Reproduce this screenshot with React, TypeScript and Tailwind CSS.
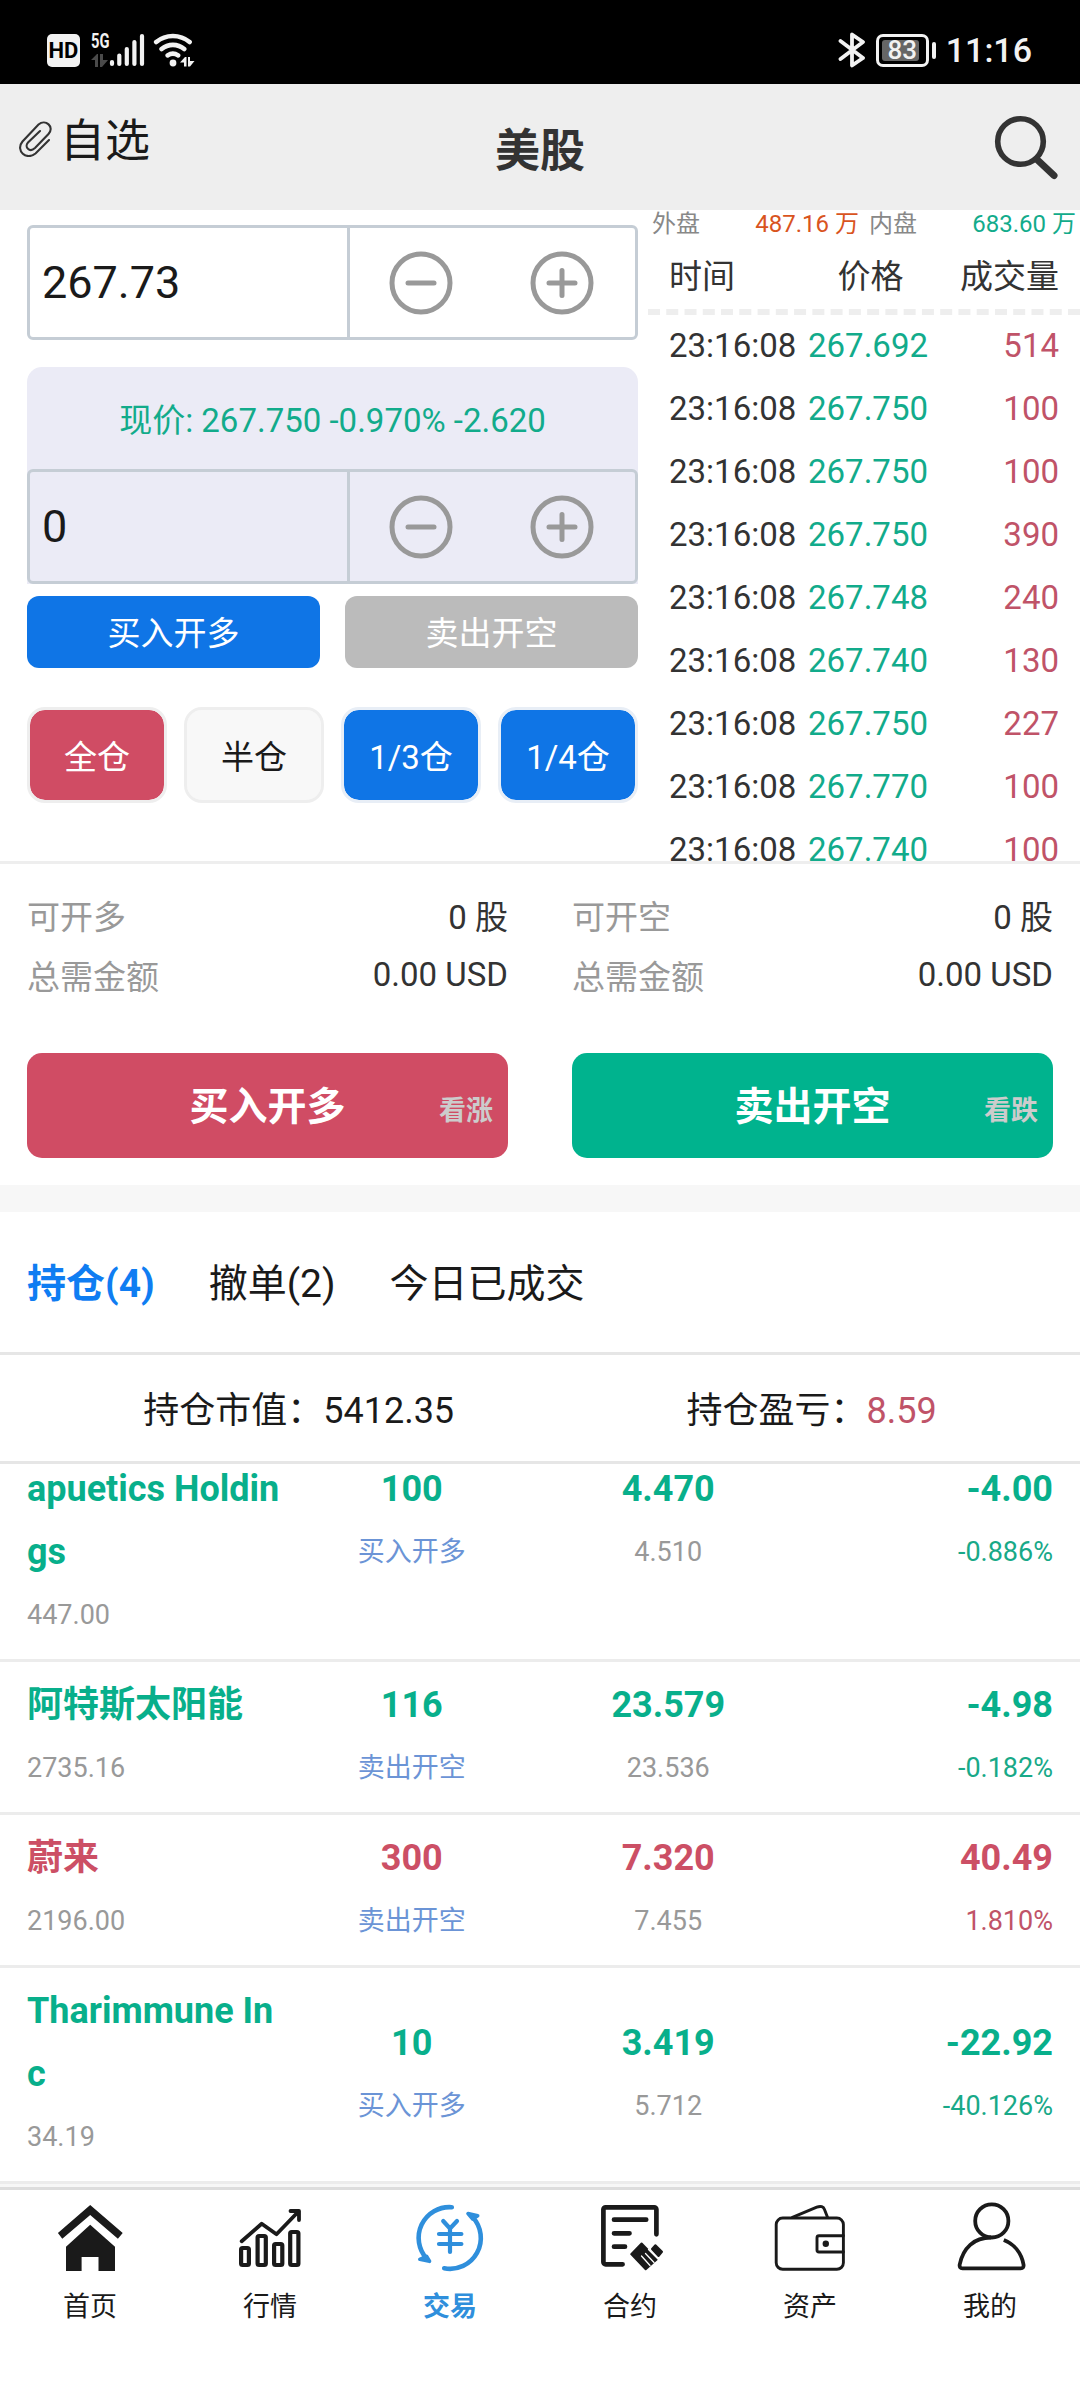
import { ReactNode } from 'react';
import clsx from 'clsx';

const trades = [
    { time: '23:16:08', price: '267.692', volume: 514 },
    { time: '23:16:08', price: '267.750', volume: 100 },
    { time: '23:16:08', price: '267.750', volume: 100 },
    { time: '23:16:08', price: '267.750', volume: 390 },
    { time: '23:16:08', price: '267.748', volume: 240 },
    { time: '23:16:08', price: '267.740', volume: 130 },
    { time: '23:16:08', price: '267.750', volume: 227 },
    { time: '23:16:08', price: '267.770', volume: 100 },
    { time: '23:16:08', price: '267.740', volume: 100 },
];

const positions = [
    { name: 'apuetics Holdings', value: '447.00', qty: 100, side: '买入开多', price: '4.470', cost: '4.510', pnl: '-4.00', rate: '-0.886%', up: false, top: true },
    { name: '阿特斯太阳能', value: '2735.16', qty: 116, side: '卖出开空', price: '23.579', cost: '23.536', pnl: '-4.98', rate: '-0.182%', up: false },
    { name: '蔚来', value: '2196.00', qty: 300, side: '卖出开空', price: '7.320', cost: '7.455', pnl: '40.49', rate: '1.810%', up: true },
    { name: 'Tharimmune Inc', value: '34.19', qty: 10, side: '买入开多', price: '3.419', cost: '5.712', pnl: '-22.92', rate: '-40.126%', up: false },
];

/* Status bar */
function StatusBar() {
    return (
        <div className="h-[84px] bg-black flex items-center justify-between pl-[47px] pr-[48px] pt-[16px]">
            <div className="flex items-center">
                <div className="w-[33px] h-[33px] rounded-[5px] bg-[#f2f2f2] text-black text-[22px] leading-[34px] font-bold flex justify-center">HD</div>
                <div className="ml-[11px] w-[18px] h-[34px] flex flex-col justify-between">
                    <span className="text-[#f2f2f2] text-[21px] leading-[17px] font-bold origin-left scale-x-[0.7]">5G</span>
                    <svg className="w-[17px] h-[13px]" viewBox="0 0 17 13" fill="#4a4a4a">
                        <path d="M0 6 6 0h1v13H4V6zM9 0h3v6h5l-6 7H9z" />
                    </svg>
                </div>
                <svg className="w-[36px] h-[34px]" viewBox="0 0 36 34" stroke="#f2f2f2" strokeWidth="4.2" strokeLinecap="round">
                    <path d="M3 29v2M10.3 22.5V31M17.8 16v15M25.4 9v22M33 3v28" />
                </svg>
                <svg className="ml-[8px] w-[42px] h-[34px]" viewBox="0 0 42 34" fill="none" stroke="#f2f2f2" strokeWidth="4.6" strokeLinecap="round">
                    <path d="M3.2 9a26 26 0 0 1 33.4 0M8.6 16a17.5 17.5 0 0 1 22.6 0M14.7 22.4a9.3 9.3 0 0 1 10.4 0" />
                    <circle cx="20" cy="30" r="3.4" fill="#f2f2f2" stroke="none" />
                    <path d="M27 29.5 32 24h1.500v9.500h-2.500v-4zM35 24h2v4h4.500L37 33.500h-2z" fill="#f2f2f2" stroke="none" />
                </svg>
            </div>
            <div className="flex items-center">
                <svg className="w-[28px] h-[36px]" viewBox="0 0 28 36" fill="none" stroke="#f2f2f2" strokeWidth="3.8" strokeLinejoin="round" strokeLinecap="round">
                    <path d="M3.500 9 26 26 15 33.500v-31L26 10 3.500 27" />
                </svg>
                <div className="ml-[11px] w-[53px] h-[33px] border-[3px] border-[#f2f2f2] rounded-[7px] p-[3px]">
                    <div className="w-[37px] h-[21px] rounded-[3px] bg-[#666] text-[#f2f2f2] text-[26px] leading-[21px] font-medium flex justify-center pl-[4px]">83</div>
                </div>
                <div className="ml-[3px] w-[4px] h-[17px] rounded-[2px] bg-[#f2f2f2]" />
                <span className="ml-[10px] text-[#f2f2f2] text-[34px] leading-[36px] font-medium">11:16</span>
            </div>
        </div>
    );
}

function Header() {
    return (
        <div className="h-[126px] bg-[#eee] grid grid-cols-3">
            <div className="flex pl-[18px] pt-[24px]">
                <svg className="mt-[12px] w-[35px] h-[37px]" viewBox="0 0 35 37" fill="none" stroke="#333" strokeWidth="2.100" strokeLinecap="round">
                    <path d="M31 20 17.500 33.500C8.500 41-3 30.500 4.500 21.500L20.500 4.500C27.500-1.500 37 7 30.500 14L17 28C11.500 33 6 27 10 22.500L22 11" />
                </svg>
                <span className="ml-[7px] text-[45px] leading-[68px] text-[#1a1a1a]">自选</span>
            </div>
            <h1 className="text-center text-[45px] leading-[135px] font-bold text-[#333]">美股</h1>
            <div className="flex justify-end pr-[20px] pt-[30px]">
                <svg className="w-[66px] h-[66px]" viewBox="0 0 66 66" fill="none" stroke="#333">
                    <circle cx="26.500" cy="27.500" r="22.800" strokeWidth="5.600" />
                    <path d="M43 45.500 60 61.500" strokeWidth="7" strokeLinecap="round" />
                </svg>
            </div>
        </div>
    );
}

/* Number input with minus / plus */
function Stepper({ value }: { value: string }) {
    return (
        <div className="h-[115px] border-[3px] border-[#c5cdd5] rounded-[6px] flex text-[#1a1a1a]">
            <div className="w-[320px] border-r-[3px] border-[#c5cdd5] pl-[12px] flex items-center text-[45px]">{value}</div>
            <div className="flex-1 flex items-center justify-around pr-[2px]">
                <svg className="w-[64px] h-[64px]" viewBox="0 0 64 64" fill="none" stroke="#999" strokeWidth="5" strokeLinecap="round">
                    <circle cx="32" cy="32" r="29" />
                    <path d="M19 32h26" />
                </svg>
                <svg className="w-[64px] h-[64px]" viewBox="0 0 64 64" fill="none" stroke="#999" strokeWidth="5" strokeLinecap="round">
                    <circle cx="32" cy="32" r="29" />
                    <path d="M19 32h26M32 19.500v25" />
                </svg>
            </div>
        </div>
    );
}

function OrderForm() {
    return (
        <div className="w-[648px] pl-[27px] pr-[10px] pt-[15px]">
            <Stepper value="267.73" />
            <div className="mt-[27px] bg-[#ebebf6] rounded-t-[15px]">
                <div className="h-[102px] pt-[5px] flex items-center justify-center text-[33px] text-[#12ab8b]">现价: 267.750 -0.970% -2.620</div>
                <Stepper value="0" />
            </div>
            <div className="mt-[12px] flex gap-[25px] text-[33px] text-white">
                <button className="flex-1 h-[72px] pt-[4px] rounded-[12px] bg-[#0f75e6]">买入开多</button>
                <button className="flex-1 h-[72px] pt-[4px] rounded-[12px] bg-[#bbb]">卖出开空</button>
            </div>
            <div className="mt-[39px] grid grid-cols-4 gap-[17px] text-[33px] text-white">
                <button className="h-[96px] pt-[5px] rounded-[18px] border-[3px] border-[#eee] bg-clip-padding bg-[#d04c64]">全仓</button>
                <button className="h-[96px] pt-[5px] rounded-[18px] border-[3px] border-[#eee] bg-clip-padding bg-[#f8f8f8] text-[#1a1a1a]">半仓</button>
                <button className="h-[96px] pt-[5px] rounded-[18px] border-[3px] border-[#e8eef6] bg-clip-padding bg-[#0f75e6]">1/3仓</button>
                <button className="h-[96px] pt-[5px] rounded-[18px] border-[3px] border-[#e8eef6] bg-clip-padding bg-[#0f75e6]">1/4仓</button>
            </div>
        </div>
    );
}

function TradeList() {
    return (
        <div className="flex-1 text-[#333]">
            <div className="h-[27px] flex text-[24px] leading-[28px] text-[#888]">
                <div className="w-[218px] flex justify-between pl-[4px] pr-[7px]">
                    <span>外盘</span>
                    <span className="text-[#d9541e]">487.16 万</span>
                </div>
                <div className="flex-1 flex justify-between pl-[3px] pr-[4px]">
                    <span>内盘</span>
                    <span className="text-[#12ab8b]">683.60 万</span>
                </div>
            </div>
            <div className="h-[78px] pt-[7px] border-b-[6px] border-dashed border-[#eee] flex items-center justify-between pl-[21px] pr-[21px] text-[33px]">
                <span>时间</span>
                <span className="ml-[46px]">价格</span>
                <span>成交量</span>
            </div>
            {trades.map((t, i) => (
                <div key={i} className="h-[63px] flex text-[33px] leading-[62px] pl-[21px] pr-[21px]">
                    <span className="w-[139px]">{t.time}</span>
                    <span className="text-[#12ab8b]">{t.price}</span>
                    <span className="ml-auto text-[#c05368]">{t.volume}</span>
                </div>
            ))}
        </div>
    );
}

function OrderSide({ label, action, hint, color }: { label: string; action: string; hint: string; color: string }) {
    return (
        <div className="flex-1 text-[33px] leading-[60px] text-[#333]">
            <div className="flex justify-between">
                <span className="text-[#999]">{label}</span>
                <span>0 股</span>
            </div>
            <div className="flex justify-between">
                <span className="text-[#999]">总需金额</span>
                <span className="-mt-[3px]">0.00 USD</span>
            </div>
            <button className={clsx('relative mt-[45px] w-full h-[105px] pt-[3px] rounded-[15px] text-white text-[39px] font-bold', color)}>
                {action}
                <span className="absolute right-[15px] top-[28px] text-[27px] text-[#ccc]">{hint}</span>
            </button>
        </div>
    );
}

function PositionRow({ item }: { item: any }) {
    const tone = item.up ? 'text-[#cc4f65]' : 'text-[#08af8b]';
    const subTone = item.up ? 'text-[#c05368]' : 'text-[#18a988]';

    return (
        <div className={clsx('grid grid-cols-4 px-[27px] py-[12px] border-b-[3px] border-[#ececec] leading-[63px] text-[27px]', item.top ? 'items-start' : 'items-center')}>
            <div>
                <p className={clsx('text-[36px] font-bold break-all', tone)}>{item.name}</p>
                <p className="text-[#999]">{item.value}</p>
            </div>
            <div className="text-center">
                <p className={clsx('text-[36px] font-bold', tone)}>{item.qty}</p>
                <p className="text-[#6b94d6]">{item.side}</p>
            </div>
            <div className="text-center">
                <p className={clsx('text-[36px] font-bold', tone)}>{item.price}</p>
                <p className="text-[#999]">{item.cost}</p>
            </div>
            <div className="text-right">
                <p className={clsx('text-[36px] font-bold', tone)}>{item.pnl}</p>
                <p className={subTone}>{item.rate}</p>
            </div>
        </div>
    );
}

function NavItem({ label, active, children }: { label: string; active?: boolean; children: ReactNode }) {
    return (
        <div className={clsx('flex-1 flex flex-col items-center', active ? 'text-[#2f8fdc] font-bold' : 'text-[#1a1a1a]')}>
            <svg className="w-[72px] h-[72px]" viewBox="0 0 72 72" fill="none" stroke="currentColor" strokeLinecap="round" strokeLinejoin="round">
                {children}
            </svg>
            <span className="mt-[13px] text-[27px] leading-[40px]">{label}</span>
        </div>
    );
}

function BottomNav() {
    return (
        <div className="h-[213px] border-t-[3px] border-[#ddd] bg-white flex pt-[12px]">
            <NavItem label="首页">
                <path d="M36.200 3 3.900 31l4.400 5.700L36.200 13l27.700 23.700L68.700 31zM36.200 22.700 12 44.700V69h15.600V55h16.900v14H61V44.700z" fill="currentColor" stroke="none" />
            </NavItem>
            <NavItem label="行情">
                <g strokeWidth="4.200">
                    <rect x="7.100" y="46" width="7.800" height="17" rx="1.500" />
                    <rect x="23.600" y="34" width="8.200" height="29" rx="1.500" />
                    <rect x="40.100" y="42" width="8.200" height="21" rx="1.500" />
                    <rect x="56.200" y="30" width="8.200" height="33" rx="1.500" />
                    <path d="m7.700 39.300 20-17.600 14.800 10.600L64 10M56.500 9H65v9" strokeWidth="3.800" />
                </g>
            </NavItem>
            <NavItem label="交易" active>
                <g strokeWidth="4.600">
                    <path d="M37.800 5.200A30.800 30.800 0 0 0 13 57M30.200 66.300A30.800 30.800 0 0 0 58.500 15" />
                    <path d="m5.800 57.300 9.700 2-3-5zM54 11.500l9.700 2.200-5 3.300z" strokeWidth="3.600" fill="currentColor" />
                    <path d="m29.200 19 6.800 7.500 7-7.500M36 27v23M25 32h22.400M25 42h22.400" strokeWidth="4.200" />
                </g>
            </NavItem>
            <NavItem label="合约">
                <path d="M28.600 62.300h-17a2.200 2.200 0 0 1-2.200-2.200V7.500a2.200 2.200 0 0 1 2.200-2.200h48.600a2.200 2.200 0 0 1 2.200 2.200v24.800M20 17.700h32.200M20 31.300h15.500M20 44.700h11" strokeWidth="4.700" />
                <path d="m47.600 41.500-10.400 10.600 14.500 15.200 11.200-10zM61.400 43.300l6.600 6.500-3.500 4.200-6.500-7z" fill="currentColor" strokeWidth="2" />
                <path d="m47.500 54 8.500 9.500M51.500 51.500l8.500 9M54.500 47.500l9.500 9.500" stroke="white" strokeWidth="1.300" />
            </NavItem>
            <NavItem label="资产">
                <g strokeWidth="2.900">
                    <rect x="2.200" y="16" width="67.200" height="51.300" rx="6.500" />
                    <path d="M69.400 33.700H45a2 2 0 0 0-2 2V48a2 2 0 0 0 2 2h24.400M18.400 15.300 42.800 5.200c4-1.600 6.700-.5 7.700 2.200l3 7.900" />
                    <circle cx="51.800" cy="41.700" r="3.200" fill="currentColor" stroke="none" />
                </g>
            </NavItem>
            <NavItem label="我的">
                <g strokeWidth="3.800">
                    <circle cx="37.800" cy="18.900" r="16.600" />
                    <path d="M37 35.500C20 35.500 9 46 5.700 62.500c-.4 2.500.6 3.800 2.800 3.800h58.200c2.200 0 3.200-1.300 2.800-3.800C67.500 51 60 42 49.800 38" strokeLinecap="butt" />
                </g>
            </NavItem>
        </div>
    );
}

export default function App() {
    return (
        <div className="w-[1080px] h-[2400px] bg-white overflow-hidden flex flex-col font-['Roboto','Noto_Sans_CJK_SC',sans-serif]">
            <StatusBar />
            <Header />

            {/* Order form + latest trades */}
            <div className="h-[654px] shrink-0 border-b-[3px] border-[#eee] flex overflow-hidden">
                <OrderForm />
                <TradeList />
            </div>

            {/* Buy / sell */}
            <div className="h-[348px] shrink-0 border-b-[27px] border-[#f7f7f7] flex gap-[64px] px-[27px] pt-[24px]">
                <OrderSide label="可开多" action="买入开多" hint="看涨" color="bg-[#d04c64]" />
                <OrderSide label="可开空" action="卖出开空" hint="看跌" color="bg-[#00b38e]" />
            </div>

            {/* Tabs */}
            <div className="h-[143px] pt-[5px] shrink-0 border-b-[3px] border-[#e6e6e6] flex items-center gap-[54px] px-[27px] text-[39px] text-[#1a1a1a]">
                <span className="font-bold text-[#0f7df2]">持仓(4)</span>
                <span>撤单(2)</span>
                <span>今日已成交</span>
            </div>

            {/* Summary */}
            <div className="h-[109px] pt-[6px] shrink-0 border-b-[3px] border-[#e6e6e6] flex items-center justify-around px-[27px] text-[36px] text-[#1a1a1a]">
                <span>持仓市值：5412.35</span>
                <span>持仓盈亏：<span className="text-[#c05368]">8.59</span></span>
            </div>

            {/* Positions, scrolled slightly past the first row */}
            <div className="h-[723px] shrink-0 bg-[#f7f7f7] overflow-hidden">
                <div className="-mt-[18px] bg-white">
                    {positions.map((p) => (
                        <PositionRow key={p.name} item={p} />
                    ))}
                </div>
            </div>

            <BottomNav />
        </div>
    );
}
